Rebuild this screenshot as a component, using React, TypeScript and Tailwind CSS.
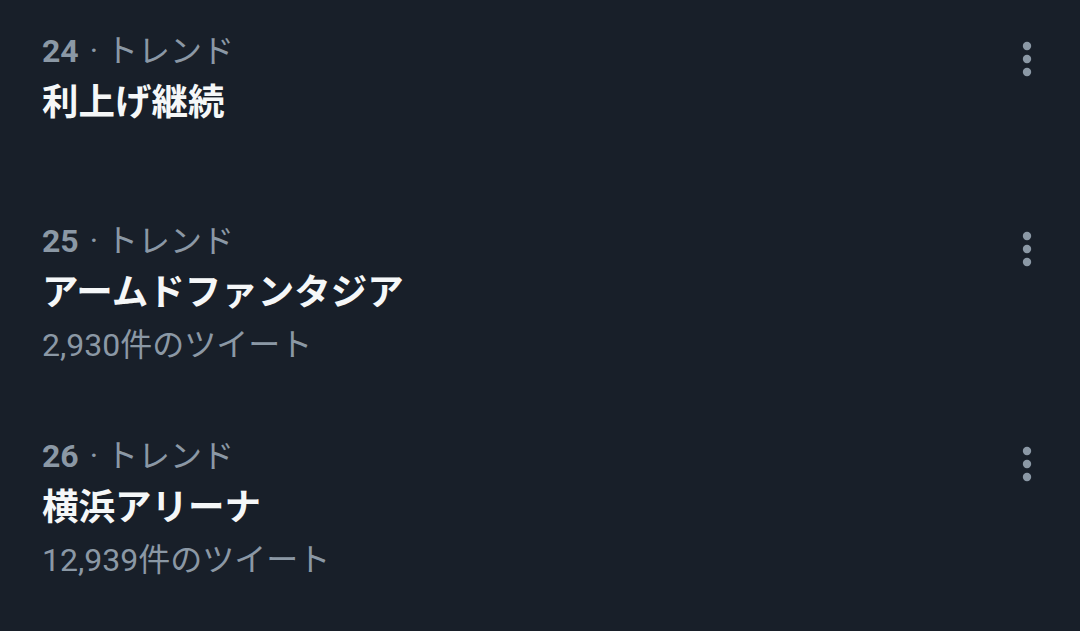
import React from "react";

type Trend = { rank: number; title: string; count?: string; pb: string };

const trends: Trend[] = [
  { rank: 24, title: "利上げ継続", pb: "pb-[59px]" },
  { rank: 25, title: "アームドファンタジア", count: "2,930件のツイート", pb: "pb-[36px]" },
  { rank: 26, title: "横浜アリーナ", count: "12,939件のツイート", pb: "pb-[36px]" },
];

function MoreIcon() {
  return (
    <svg width="10" height="36" viewBox="0 0 10 36" className="text-[#8b98a5]">
      <circle cx="5" cy="5" r="4.2" fill="currentColor" />
      <circle cx="5" cy="18" r="4.2" fill="currentColor" />
      <circle cx="5" cy="31" r="4.2" fill="currentColor" />
    </svg>
  );
}

export default function App() {
  return (
    <div
      className="w-[1080px] h-[631px] bg-[#181f29] overflow-hidden"
      style={{ fontFamily: 'Roboto, "Noto Sans CJK JP", sans-serif' }}
    >
      {trends.map((t) => (
        <div key={t.rank} className={`flex justify-between pl-[42px] pr-[48px] pt-[27px] ${t.pb}`}>
          <div className="flex flex-col">
            <div className="text-[32px] leading-[48px] text-[#8b98a5]">
              <span className="font-bold">{t.rank}</span>
              {" "}
              <span className="ml-[3px]">·</span>
              {" "}トレンド
            </div>
            <div className="text-[36.5px] leading-[56px] font-bold text-[#f5f7f8]">{t.title}</div>
            {t.count && (
              <div className="text-[32px] leading-[48px] text-[#8b98a5]">{t.count}</div>
            )}
          </div>
          <div className="pt-[14px]">
            <MoreIcon />
          </div>
        </div>
      ))}
    </div>
  );
}
